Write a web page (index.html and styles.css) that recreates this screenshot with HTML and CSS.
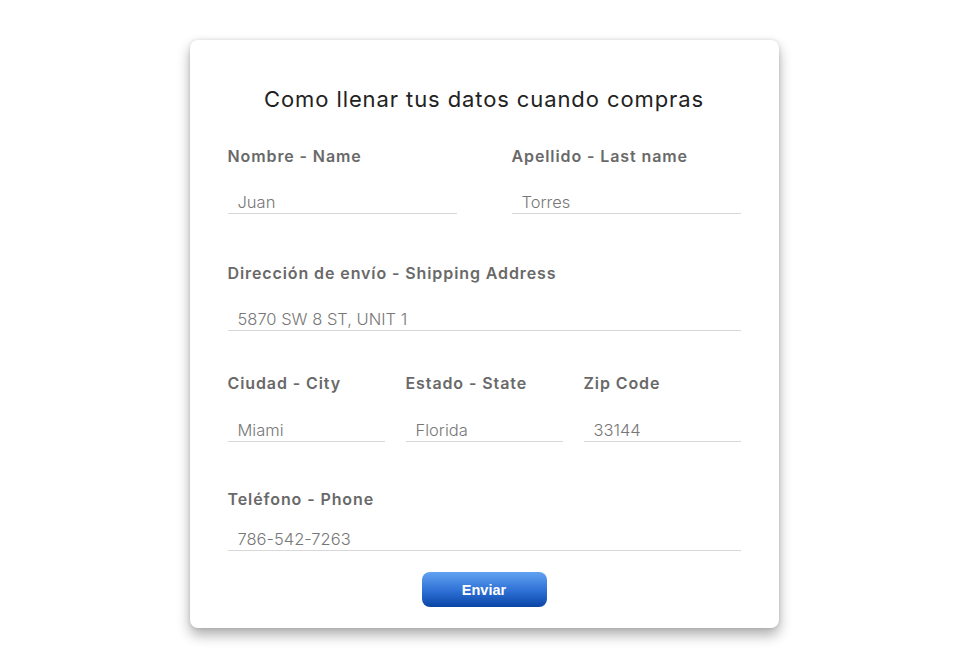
FILE: index.html
```html
<!DOCTYPE html>
<html lang="es">
<head>
<meta charset="utf-8">
<title>Formulario</title>
<link rel="stylesheet" href="styles.css">
</head>
<body>
<main class="card">
  <h1 class="title">Como llenar tus datos cuando compras</h1>
  <form class="form">
    <div class="row row-2 r1">
      <label class="field"><span class="label">Nombre - Name</span><input class="input" type="text" placeholder="Juan"></label>
      <label class="field"><span class="label">Apellido - Last name</span><input class="input" type="text" placeholder="Torres"></label>
    </div>
    <div class="row r2">
      <label class="field"><span class="label">Dirección de envío - Shipping Address</span><input class="input" type="text" placeholder="5870 SW 8 ST, UNIT 1"></label>
    </div>
    <div class="row row-3 r3">
      <label class="field wide"><span class="label">Ciudad - City</span><input class="input" type="text" placeholder="Miami"></label>
      <label class="field wide"><span class="label">Estado - State</span><input class="input" type="text" placeholder="Florida"></label>
      <label class="field wide"><span class="label">Zip Code</span><input class="input" type="text" placeholder="33144"></label>
    </div>
    <div class="row r4">
      <label class="field tight"><span class="label">Teléfono - Phone</span><input class="input" type="text" placeholder="786-542-7263"></label>
    </div>
    <div class="actions">
      <button class="btn" type="button">Enviar</button>
    </div>
  </form>
</main>
</body>
</html>
```
FILE: styles.css
```css
html, body {
  margin: 0;
  padding: 0;
  background: #ffffff;
}
body {
  font-family: Inter, "DejaVu Sans", sans-serif;
  padding: 40px 0 0 1px;
  min-height: 100vh;
  box-sizing: border-box;
}
.card {
  box-sizing: border-box;
  width: 589px;
  height: 588px;
  margin: 0 auto;
  padding: 47px 38px 21px;
  background: #fff;
  border-radius: 8px;
  box-shadow: 0 7px 13px rgba(0, 0, 0, 0.32), 0 0 4px rgba(0,0,0,0.12);
  display: flex;
  flex-direction: column;
}
.title {
  margin: 0;
  font-size: 22px;
  line-height: 24px;
  font-weight: 400;
  letter-spacing: 0.9px;
  color: #222;
  text-align: center;
}
.form {
  display: flex;
  flex-direction: column;
}
.row { display: grid; }
.row-2 { grid-template-columns: 1fr 1fr; column-gap: 55px; }
.row-3 { grid-template-columns: 1fr 1fr 1fr; column-gap: 21px; }
.r1 { margin-top: 35px; }
.r2 { margin-top: 49px; }
.r3 { margin-top: 42px; }
.r4 { margin-top: 47px; }
.field {
  display: flex;
  flex-direction: column;
  gap: 24px;
}
.field.wide { gap: 25px; }
.field.tight { gap: 18px; }
.label {
  font-size: 16px;
  line-height: 20px;
  font-weight: 600;
  letter-spacing: 0.9px;
  color: #696969;
}
.input {
  box-sizing: border-box;
  height: 24px;
  width: 100%;
  margin: 0;
  padding: 0 0 0 10px;
  border: 0;
  border-bottom: 1px solid #d8d8d8;
  background: transparent;
  font-family: Inter, sans-serif;
  font-size: 16.5px;
  font-weight: 300;
  color: #777;
  outline: none;
}
.input::placeholder {
  color: #777;
  opacity: 1;
}
.actions {
  display: flex;
  justify-content: center;
  margin-top: 21px;
}
.btn {
  width: 125px;
  height: 35px;
  border: 0;
  border-radius: 8px;
  background: linear-gradient(to bottom, #62a2f2 0%, #2d6fd4 55%, #0a45a6 100%);
  color: #fff;
  font-family: "Liberation Sans", Arial, sans-serif;
  font-weight: 700;
  font-size: 14.5px;
  cursor: pointer;
}
```
